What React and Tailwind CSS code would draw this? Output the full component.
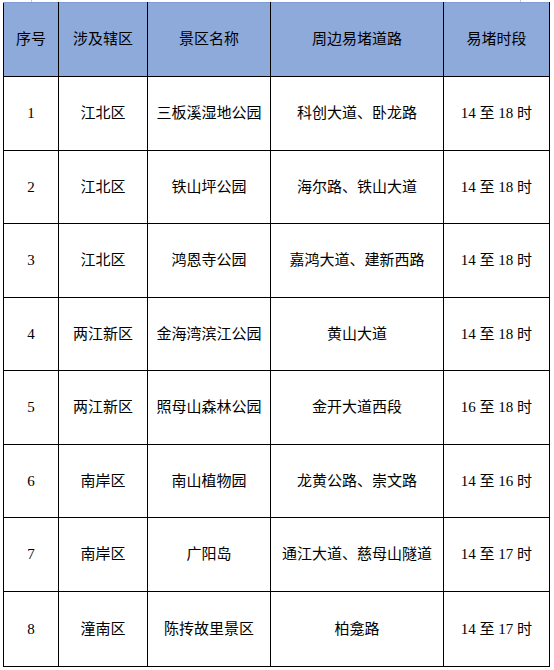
import React from "react";

const rows = [
  ["1", "江北区", "三板溪湿地公园", "科创大道、卧龙路", "14 至 18 时"],
  ["2", "江北区", "铁山坪公园", "海尔路、铁山大道", "14 至 18 时"],
  ["3", "江北区", "鸿恩寺公园", "嘉鸿大道、建新西路", "14 至 18 时"],
  ["4", "两江新区", "金海湾滨江公园", "黄山大道", "14 至 18 时"],
  ["5", "两江新区", "照母山森林公园", "金开大道西段", "16 至 18 时"],
  ["6", "南岸区", "南山植物园", "龙黄公路、崇文路", "14 至 16 时"],
  ["7", "南岸区", "广阳岛", "通江大道、慈母山隧道", "14 至 17 时"],
  ["8", "潼南区", "陈抟故里景区", "柏龛路", "14 至 17 时"],
];

const heights = ["h-[74px]", "h-[73px]", "h-[74px]", "h-[73px]", "h-[74px]", "h-[73px]", "h-[74px]", "h-[75px]"];

const cell = "border border-black text-center align-middle p-0";

export default function App() {
  return (
    <div className="w-[554px] h-[670px] bg-white font-['Liberation_Serif','Noto_Sans_CJK_SC',serif] text-[15px] text-black">
      {/* grid marks above the sheet */}
      <div className="flex h-[2px]">
        <div className="ml-[31px] w-px h-full bg-[#c8c8c8]" />
        <div className="ml-[488px] w-px h-full bg-[#c8c8c8]" />
      </div>
      <table className="ml-[3px] w-[546px] border-collapse table-fixed border-t border-t-[#7f9ed6]">
        <colgroup>
          <col className="w-[55px]" />
          <col className="w-[89px]" />
          <col className="w-[123px]" />
          <col className="w-[173px]" />
          <col className="w-[106px]" />
        </colgroup>
        <thead>
          <tr className="h-[74px] bg-[#8eaadb]">
            {["序号", "涉及辖区", "景区名称", "周边易堵道路", "易堵时段"].map((h) => (
              <th key={h} className={`${cell} border-t-[#7f9ed6] font-normal`}>
                {h}
              </th>
            ))}
          </tr>
        </thead>
        <tbody>
          {rows.map((r, i) => (
            <tr key={r[0]} className={heights[i]}>
              {r.map((c, j) => (
                <td key={j} className={cell}>
                  {c}
                </td>
              ))}
            </tr>
          ))}
        </tbody>
      </table>
    </div>
  );
}
